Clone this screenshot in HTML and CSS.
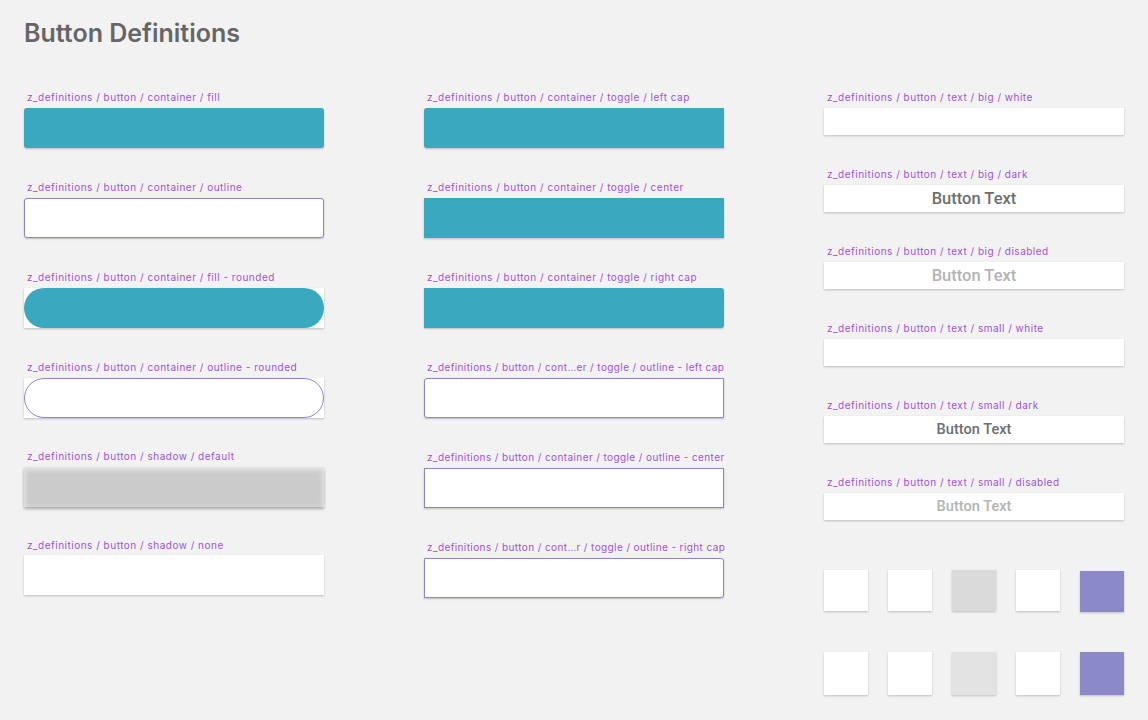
FILE: index.html
```html
<!DOCTYPE html>
<html>
<head>
<meta charset="utf-8">
<link rel="stylesheet" href="styles.css">
</head>
<body>
<h1 class="title">Button Definitions</h1>
<div class="board">
  <div class="col">
    <div class="item"><div class="label">z_definitions / button / container / fill</div><div class="box fill r3"></div></div>
    <div class="item"><div class="label">z_definitions / button / container / outline</div><div class="box outline r3"></div></div>
    <div class="item"><div class="label">z_definitions / button / container / fill - rounded</div><div class="box plain"><div class="pill fill"></div></div></div>
    <div class="item"><div class="label">z_definitions / button / container / outline - rounded</div><div class="box plain"><div class="pill outline"></div></div></div>
    <div class="item up1"><div class="label">z_definitions / button / shadow / default</div><div class="box shadowed"></div></div>
    <div class="item up2"><div class="label">z_definitions / button / shadow / none</div><div class="box plain"></div></div>
  </div>
  <div class="col">
    <div class="item"><div class="label">z_definitions / button / container / toggle / left cap</div><div class="box fill rl"></div></div>
    <div class="item"><div class="label">z_definitions / button / container / toggle / center</div><div class="box fill"></div></div>
    <div class="item"><div class="label">z_definitions / button / container / toggle / right cap</div><div class="box fill rr"></div></div>
    <div class="item"><div class="label tight">z_definitions / button / cont…er / toggle / outline - left cap</div><div class="box outline rl"></div></div>
    <div class="item"><div class="label tight">z_definitions / button / container / toggle / outline - center</div><div class="box outline"></div></div>
    <div class="item"><div class="label tight">z_definitions / button / cont…r / toggle / outline - right cap</div><div class="box outline rr"></div></div>
  </div>
  <div class="col">
    <div class="item t"><div class="label">z_definitions / button / text / big / white</div><div class="tbox"></div></div>
    <div class="item t"><div class="label">z_definitions / button / text / big / dark</div><div class="tbox big dark">Button Text</div></div>
    <div class="item t"><div class="label">z_definitions / button / text / big / disabled</div><div class="tbox big dis">Button Text</div></div>
    <div class="item t"><div class="label">z_definitions / button / text / small / white</div><div class="tbox"></div></div>
    <div class="item t"><div class="label">z_definitions / button / text / small / dark</div><div class="tbox small dark">Button Text</div></div>
    <div class="item t"><div class="label">z_definitions / button / text / small / disabled</div><div class="tbox small dis">Button Text</div></div>
    <div class="squares first">
      <div class="sq"></div><div class="sq"></div><div class="sq g1"></div><div class="sq"></div><div class="sq pu low"></div>
    </div>
    <div class="squares second">
      <div class="sq"></div><div class="sq"></div><div class="sq g2"></div><div class="sq"></div><div class="sq pu"></div>
    </div>
  </div>
</div>
</body>
</html>
```

FILE: styles.css
```css
html, body {
  margin: 0;
  padding: 0;
  background: #f2f2f2;
}
body {
  width: 1148px;
  height: 720px;
  overflow: hidden;
  font-family: Roboto, "Liberation Sans", sans-serif;
}
.title {
  margin: 0;
  padding: 18px 0 0 24px;
  height: 31px;
  font-family: Inter, "Liberation Sans", Arial, sans-serif;
  font-weight: 600;
  font-size: 25px;
  line-height: 31px;
  color: #666666;
  letter-spacing: 0;
}
.board {
  display: grid;
  grid-template-columns: 300px 300px 300px;
  column-gap: 100px;
  padding: 42px 0 0 24px;
}
.col {
  display: flex;
  flex-direction: column;
}
.item {
  display: flex;
  flex-direction: column;
  margin-bottom: 33px;
}
.item.up1 { margin-top: -1px; }
.item.up2 { margin-top: -1px; }
.up2 .label { margin-bottom: 4px; }
.label {
  font-family: Inter, Roboto, sans-serif;
  font-size: 10px;
  line-height: 12px;
  height: 12px;
  padding: 0 0 0 3px;
  margin-bottom: 5px;
  color: #a052cf;
  letter-spacing: 0.5px;
  white-space: nowrap;
}
.label.tight { letter-spacing: 0.4px; }
.box {
  height: 40px;
  box-sizing: border-box;
  box-shadow: 0 1px 2px rgba(0, 0, 0, 0.22);
}
.fill { background: #3aa9bf; }
.outline { background: #ffffff; border: 1px solid #8a86cc; }
.r3 { border-radius: 3px; }
.rl { border-radius: 3px 0 0 3px; }
.rr { border-radius: 0 3px 3px 0; }
.plain { background: #ffffff; }
.pill {
  height: 40px;
  box-sizing: border-box;
  border-radius: 20px;
}
.shadowed {
  background: #cbcbcb;
  box-shadow: inset 0 2px 5px 1px rgba(255, 255, 255, 0.55), 0 2px 3px rgba(0, 0, 0, 0.3);
}
.tbox {
  height: 27px;
  background: #ffffff;
  box-shadow: 0 1px 2px rgba(0, 0, 0, 0.22);
  text-align: center;
  font-weight: 500;
}
.tbox.big { font-size: 16.5px; line-height: 27px; }
.tbox.small { font-size: 14.6px; line-height: 27px; }
.dark { color: #6b6f6f; }
.dis { color: #b4b4b4; }
.squares {
  display: flex;
  justify-content: space-between;
  align-items: flex-start;
}
.squares.first { margin-top: 17px; height: 42px; }
.squares.second { margin-top: 40px; }
.sq {
  width: 44px;
  height: 41px;
  background: #ffffff;
  box-shadow: 0 1px 2px rgba(0, 0, 0, 0.22);
}
.second .sq { height: 43px; }
.sq.g1 { background: #dadada; }
.sq.g2 { background: #e3e3e3; }
.sq.pu { background: #8b89c8; }
.sq.low { margin-top: 1px; }
```
